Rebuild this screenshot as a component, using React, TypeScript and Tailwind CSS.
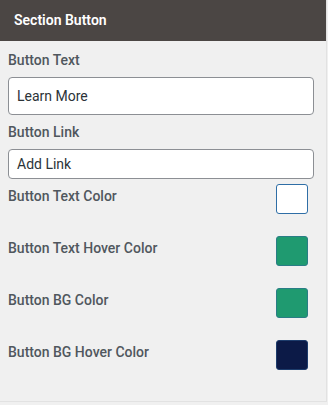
const swatches = [
  { label: 'Button Text Color', fill: 'bg-white', border: 'border-[#2f6ea6]' },
  { label: 'Button Text Hover Color', fill: 'bg-[#1f9a70]', border: 'border-[#2a7d86]' },
  { label: 'Button BG Color', fill: 'bg-[#1f9a70]', border: 'border-[#2a7d86]' },
  { label: 'Button BG Hover Color', fill: 'bg-[#0c1a47]', border: 'border-[#1d3c6c]' },
]

function Label({ children }: { children: string }) {
  return <div className="text-[14px] leading-[20px] font-medium text-[#50575e]">{children}</div>
}

export default function App() {
  return (
    <div className="min-h-[405px] bg-[#f0f0f0] font-['Roboto',sans-serif]">
      <div className="w-[327px] border-r border-b border-[#e2e2e2] pb-[31px]">
        <div className="flex h-[41px] items-center bg-[#4b4644] px-[14px] text-[14px] font-semibold text-white">
          Section Button
        </div>
        <div className="px-2 pt-[9px]">
          <Label>Button Text</Label>
          <div className="mt-[7px] flex h-[38px] w-[306px] items-center rounded-[4px] border border-[#8c8f94] bg-white px-2 text-[14px] text-[#2c3338]">
            Learn More
          </div>
          <div className="mt-[7px]">
            <Label>Button Link</Label>
          </div>
          <div className="mt-[7px] flex h-[30px] w-[306px] items-center rounded-[4px] border border-[#8c8f94] bg-white px-2 text-[14px] text-[#2c3338]">
            Add Link
          </div>
          <div className="mt-[5px] flex flex-col gap-[22px]">
            {swatches.map(s => (
              <div key={s.label} className="flex items-start justify-between pr-[10px]">
                <div className="mt-[2px]">
                  <Label>{s.label}</Label>
                </div>
                <div className={`h-[30px] w-[32px] rounded-[3px] border ${s.fill} ${s.border}`} />
              </div>
            ))}
          </div>
        </div>
      </div>
    </div>
  )
}
